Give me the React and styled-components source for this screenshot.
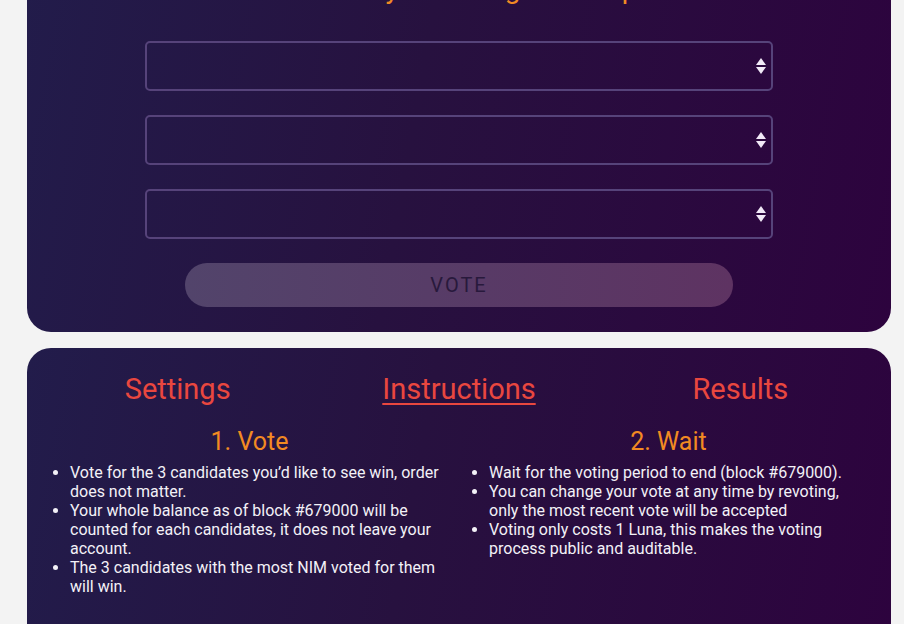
import React from "react";
import styled, { createGlobalStyle } from "styled-components";

const Global = createGlobalStyle`
  html, body { margin: 0; padding: 0; background: #f3f3f3; }
  body { font-family: Roboto, "Noto Sans", "Liberation Sans", sans-serif; overflow: hidden; }
  * { box-sizing: border-box; }
`;

const Page = styled.div`
  display: flex;
  flex-direction: column;
  gap: 16px;
  width: 864px;
  margin-left: 27px;
`;

const Card = styled.section`
  border-radius: 24px;
  background: linear-gradient(100deg, #221c4b 0%, #27113f 45%, #2d033e 100%);
  color: #f1eef6;
`;

const VoteCard = styled(Card)`
  margin-top: -68px;
  padding: 40px 0 25px;
  display: flex;
  flex-direction: column;
  align-items: center;
`;

const Title = styled.h1`
  margin: 0 0 35px;
  font-size: 28px;
  line-height: 34px;
  font-weight: 400;
  color: #f08a24;
  text-align: center;
`;

const Fields = styled.div`
  display: flex;
  flex-direction: column;
  gap: 24px;
  align-items: center;
`;

const SelectBox = styled.label`
  position: relative;
  display: block;
  width: 628px;
  height: 50px;
`;

const NativeSelect = styled.select`
  appearance: none;
  -webkit-appearance: none;
  width: 100%;
  height: 100%;
  background: transparent;
  border: 2px solid #56437a;
  border-radius: 5px;
  color: #fff;
  font: inherit;
  outline: none;
`;

const Arrows = styled.svg`
  position: absolute;
  right: 4px;
  top: 50%;
  transform: translateY(-50%);
  pointer-events: none;
`;

const VoteButton = styled.button`
  margin-top: 24px;
  width: 548px;
  height: 44px;
  border: none;
  border-radius: 22px;
  background: linear-gradient(to right, #52446b, #583a66 55%, #5e3362);
  color: #28193c;
  font-family: Roboto, "Noto Sans", sans-serif;
  font-size: 20px;
  letter-spacing: 2px;
  padding: 0;
`;

const InfoCard = styled(Card)`
  padding: 24px 13px 40px;
  min-height: 300px;
`;

const Tabs = styled.nav`
  display: grid;
  grid-template-columns: 1fr 1fr 1fr;
  margin: 0 -3px;
`;

const Tab = styled.a`
  text-align: center;
  font-size: 29px;
  line-height: 34px;
  color: #e9473f;
  text-decoration: ${(p) => (p.$active ? "underline" : "none")};
  text-decoration-thickness: 2px;
  text-underline-offset: 4px;
  cursor: pointer;
`;

const Columns = styled.div`
  margin-top: 21px;
  display: grid;
  grid-template-columns: 1fr 1fr;
`;

const Column = styled.div``;

const StepTitle = styled.h2`
  margin: 0 0 6px;
  text-align: center;
  font-size: 25px;
  line-height: 30px;
  font-weight: 400;
  color: #f28a22;
`;

const Steps = styled.ul`
  margin: 0;
  padding: 0 10px 0 30px;
  font-size: 16px;
  line-height: 19px;
  color: #f3f1f7;
`;

function Select() {
  return (
    <SelectBox>
      <NativeSelect defaultValue="">
        <option value=""></option>
      </NativeSelect>
      <Arrows width="16" height="22" viewBox="0 0 16 22">
        <polygon points="8,3 13,10 3,10" fill="#f1e9f7" />
        <polygon points="3,12 13,12 8,19" fill="#f1e9f7" />
      </Arrows>
    </SelectBox>
  );
}

export default function App() {
  return (
    <>
      <Global />
      <Page>
        <VoteCard>
          <Title>Vote now for your new grant recipients</Title>
          <Fields>
            <Select />
            <Select />
            <Select />
          </Fields>
          <VoteButton>VOTE</VoteButton>
        </VoteCard>
        <InfoCard>
          <Tabs>
            <Tab>Settings</Tab>
            <Tab $active>Instructions</Tab>
            <Tab>Results</Tab>
          </Tabs>
          <Columns>
            <Column>
              <StepTitle>1. Vote</StepTitle>
              <Steps>
                <li>Vote for the 3 candidates you’d like to see win, order does not matter.</li>
                <li>Your whole balance as of block #679000 will be counted for each candidates, it does not leave your account.</li>
                <li>The 3 candidates with the most NIM voted for them will win.</li>
              </Steps>
            </Column>
            <Column>
              <StepTitle>2. Wait</StepTitle>
              <Steps>
                <li>Wait for the voting period to end (block #679000).</li>
                <li>You can change your vote at any time by revoting, only the most recent vote will be accepted</li>
                <li>Voting only costs 1 Luna, this makes the voting process public and auditable.</li>
              </Steps>
            </Column>
          </Columns>
        </InfoCard>
      </Page>
    </>
  );
}
